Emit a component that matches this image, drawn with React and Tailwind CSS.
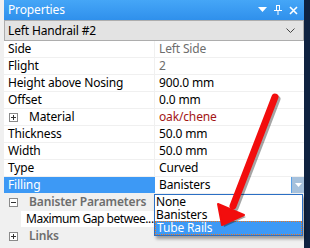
// Property grid panel with an open dropdown on the "Filling" row.

const font = { fontFamily: '"Noto Sans", "Liberation Sans", sans-serif' }

const rows = [
  { label: 'Side', value: 'Left Side', tone: 'text-[#6d6d6d]' },
  { label: 'Flight', value: '2', tone: 'text-[#6d6d6d]' },
  { label: 'Height above Nosing', value: '900.0 mm' },
  { label: 'Offset', value: '0.0 mm' },
  { label: 'Material', value: 'oak/chene', tone: 'text-[#a31515]', expand: true },
  { label: 'Thickness', value: '50.0 mm' },
  { label: 'Width', value: '50.0 mm' },
  { label: 'Type', value: 'Curved' },
]

function PlusBox({ minus }) {
  return (
    <span className="flex h-[9px] w-[9px] items-center justify-center border border-[#8a8a8a] bg-white">
      <svg width="5" height="5" viewBox="0 0 5 5">
        <rect x="0" y="2" width="5" height="1" fill="#333" />
        {!minus && <rect x="2" y="0" width="1" height="5" fill="#333" />}
      </svg>
    </span>
  )
}

function Row({ label, value, tone = 'text-black', expand }) {
  return (
    <div className="flex h-[17px] border-b border-[#f0f0f0] bg-white">
      <div className="flex w-[151px] items-center border-r border-[#f0f0f0]">
        {expand ? (
          <>
            <span className="ml-[5px] mr-[11px]"><PlusBox /></span>
            <span>{label}</span>
          </>
        ) : (
          <span className="pl-[4px]">{label}</span>
        )}
      </div>
      <div className={'flex flex-1 items-center pl-[4px] ' + tone}>{value}</div>
    </div>
  )
}

function Category({ label, minus }) {
  return (
    <div className="flex h-[17px] items-center border-b border-[#f0f0f0] bg-[#f0f0f0] font-semibold text-[#6d6d6d]">
      <span className="ml-[5px] mr-[11px]"><PlusBox minus={minus} /></span>
      <span>{label}</span>
    </div>
  )
}

export default function App() {
  return (
    <div className="relative flex h-[248px] w-[310px] overflow-hidden whitespace-nowrap bg-[#f0f0f0] text-[12px] leading-none tracking-[-0.15px]" style={font}>
      <div className="w-[4px]" />
      <div className="flex w-[300px] flex-col">
        <div className="flex h-[20px] items-center bg-gradient-to-b from-[#45a6f7] to-[#2f90ec] pl-[4px] pr-[6px] text-white">
          <span className="flex-1">Properties</span>
          <div className="flex items-center gap-[7px]">
            <svg width="9" height="6" viewBox="0 0 9 6"><path d="M0 0h9L4.5 5z" fill="#fff" /></svg>
            <svg width="8" height="10" viewBox="0 0 8 10" fill="#fff">
              <rect x="2" y="0" width="4" height="1" />
              <rect x="2" y="0" width="1" height="6" />
              <rect x="5" y="0" width="1" height="6" />
              <rect x="0" y="5" width="8" height="1" />
              <rect x="3.5" y="6" width="1" height="4" />
            </svg>
            <svg width="9" height="9" viewBox="0 0 9 9"><path d="M1 1l7 7M8 1L1 8" stroke="#fff" strokeWidth="1.6" /></svg>
          </div>
        </div>
        <div className="flex h-[21px] items-center border border-[#adadad] bg-[#e3e3e3] pl-[3px] pr-[8px]">
          <span className="flex-1">Left Handrail #2</span>
          <svg width="9" height="5" viewBox="0 0 9 5"><path d="M0.5 0.5l4 4 4-4" stroke="#444" fill="none" /></svg>
        </div>
        {rows.map((r) => (
          <Row key={r.label} {...r} />
        ))}
        <div className="flex h-[17px] border-b border-[#f0f0f0] bg-white">
          <div className="flex w-[151px] items-center bg-[#3d99f5] pl-[4px] text-white">Filling</div>
          <div className="flex flex-1 items-center pl-[4px]">
            <span className="flex-1">Banisters</span>
            <span className="flex h-full w-[13px] items-center justify-center border-l border-[#5aa0e6] bg-[#a6c1dc]">
              <svg width="7" height="4" viewBox="0 0 7 4"><path d="M0 0h7L3.5 4z" fill="#fff" /></svg>
            </span>
          </div>
        </div>
        <Category label="Banister Parameters" minus />
        <div className="flex h-[17px] border-b border-[#f0f0f0] bg-[#f0f0f0]">
          <div className="flex w-[151px] items-center">
            <span className="w-[17px] self-stretch" />
            <span className="flex h-full flex-1 items-center bg-white pl-[5px] tracking-[-0.45px]">Maximum Gap betwee...</span>
          </div>
          <div className="flex-1 bg-white" />
        </div>
        <Category label="Links" />
      </div>
      <div className="w-[6px] bg-[#0f2240]" />

      {/* open dropdown list */}
      <div className="absolute left-[154px] top-[194px] w-[149px] border border-[#2b6fc4] bg-white leading-[13px] shadow-[2px_3px_3px_rgba(0,0,0,0.35)]">
        <div className="h-[13px] pl-[1px]">None</div>
        <div className="h-[13px] pl-[1px]">Banisters</div>
        <div className="h-[14px] border border-dotted border-[#e87722] bg-[#3d99f5] pl-[1px] leading-[12px] text-white">Tube Rails</div>
      </div>

      {/* red annotation arrow */}
      <svg className="absolute left-0 top-0" width="310" height="248" viewBox="0 0 310 248">
        <g transform="translate(2 2)" fill="#000" opacity="0.35">
          <path d="M275 97L233 206" stroke="#000" strokeWidth="7" strokeLinecap="round" />
          <path d="M218 204L244 215L222 225z" />
        </g>
        <path d="M275 97L233 206" stroke="#f20d0d" strokeWidth="7" strokeLinecap="round" />
        <path d="M218 204L244 215L222 225z" fill="#f20d0d" stroke="#f20d0d" strokeWidth="2" strokeLinejoin="round" />
      </svg>
    </div>
  )
}
